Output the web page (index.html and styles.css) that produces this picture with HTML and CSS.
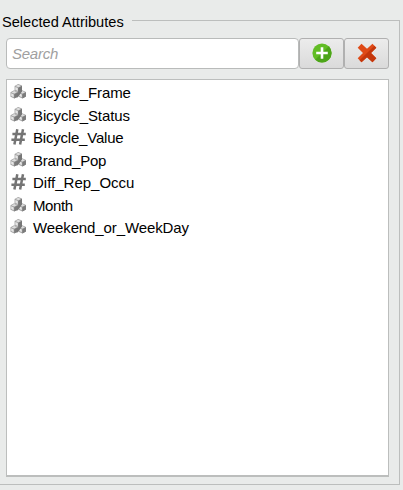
FILE: index.html
```html
<!DOCTYPE html>
<html lang="en">
<head>
<meta charset="utf-8">
<title>Selected Attributes</title>
<link rel="stylesheet" href="styles.css">
</head>
<body>
<svg class="defs" aria-hidden="true">
  <defs>
    <linearGradient id="side" x1="0" y1="0" x2="1" y2="0"><stop offset="0" stop-color="#777"/><stop offset="1" stop-color="#808080"/></linearGradient>
    <g id="cube">
      <path d="M0 2 3.6 0 7.4 1.6V6.2L3.8 8.2 0 6.4Z" fill="#a2a2a2"/>
      <path d="M.9 2.1 3.7 .8 6.4 1.9 3.8 3.3Z" fill="#dedede"/>
      <path d="M.7 3 3.2 4.1V7L.7 5.8Z" fill="#e6e6e6"/>
      <path d="M3.8 3.9 7.4 2V6.2L3.8 8.2Z" fill="url(#side)"/>
    </g>
    <symbol id="nominal" viewBox="0 0 17 16">
      <use href="#cube" x="4.6" y="0"/>
      <use href="#cube" x=".5" y="6.3"/>
      <use href="#cube" x="8.6" y="6.3"/>
      <path d="M8.4 4 12 2V7.5L8 13 6.6 14V9.8L8.4 8Z" fill="#777"/>
    </symbol>
    <symbol id="numeric" viewBox="0 0 17 16">
      <path d="M7.3 .3 4.4 15.6M13 .3 10.1 15.6M2.4 4.9H15.8M1.4 10.8H14.8" fill="none" stroke="#747474" stroke-width="2.5"/>
    </symbol>
  </defs>
</svg>
<fieldset class="group">
  <legend class="title">Selected Attributes</legend>
  <div class="toolbar">
    <input class="search" type="text" placeholder="Search" aria-label="Search">
    <button class="button" aria-label="Add">
      <svg width="20" height="20" viewBox="0 0 20 20"><circle cx="10" cy="10" r="9.6" fill="#62bd25"/><path d="M16.8 3.2A9.6 9.6 0 0 1 3.2 16.8Z" fill="#4da519"/><path d="M10 4.2V15.8M4.2 10H15.8" stroke="#fff" stroke-width="2.6"/></svg>
    </button>
    <button class="button" aria-label="Remove">
      <svg width="20" height="20" viewBox="0 0 20 20"><path d="M4.5 .8 10 5.7 15.5 .8 19.3 4.8 14 10 19.3 15.2 15.5 19.2 10 14.3 4.5 19.2 .7 15.2 6 10 .7 4.8Z" fill="#df4a17"/><path d="M19.3 4.8 14 10 19.3 15.2 15.5 19.2 10 14.3 4.5 19.2 2.6 17.2 17.4 2.8Z" fill="#c4370c"/></svg>
    </button>
  </div>
  <ul class="list">
    <li class="item"><svg class="icon"><use href="#nominal"/></svg>Bicycle_Frame</li>
    <li class="item"><svg class="icon"><use href="#nominal"/></svg>Bicycle_Status</li>
    <li class="item snug"><svg class="icon"><use href="#numeric"/></svg>Bicycle_Value</li>
    <li class="item snug"><svg class="icon"><use href="#nominal"/></svg>Brand_Pop</li>
    <li class="item wide"><svg class="icon"><use href="#numeric"/></svg>Diff_Rep_Occu</li>
    <li class="item tight"><svg class="icon"><use href="#nominal"/></svg>Month</li>
    <li class="item"><svg class="icon"><use href="#nominal"/></svg>Weekend_or_WeekDay</li>
  </ul>
</fieldset>
</body>
</html>
```
FILE: styles.css
```css
* { box-sizing: border-box; }
body {
  margin: 0;
  height: 490px;
  padding-top: 11px;
  overflow: hidden;
  background: #e9ebea;
  font-family: "Liberation Sans", Arial, sans-serif;
  font-size: 15px;
  color: #000;
}
.defs { position: absolute; width: 0; height: 0; }
.group {
  width: 400px;
  height: 474px;
  margin: 0;
  padding: 0 10px 0 6px;
  border: 1px solid #bcbebd;
  border-left: 0;
  min-width: 0;
}
.title {
  margin-left: -6px;
  padding: 0 8px 0 2px;
  height: 19px;
  line-height: 22px;
  font-size: 14.6px;
}
.toolbar { display: flex; margin-top: 8px; height: 31px; }
.search {
  width: 293px;
  height: 31px;
  padding: 0 5px;
  border: 1px solid #b9bbba;
  border-radius: 4px;
  background: #fff;
  font: italic 15px "Liberation Sans", Arial, sans-serif;
  letter-spacing: -.25px;
  outline: 0;
}
.search::placeholder { color: #a0a0a0; opacity: 1; }
.button {
  width: 45px;
  height: 31px;
  padding: 0 0 1px;
  display: flex;
  align-items: center;
  justify-content: center;
  border: 1px solid #b0b0b0;
  border-radius: 3px;
  background: linear-gradient(#ececec, #dadada);
}
.list {
  list-style: none;
  margin: 10px 0 0;
  padding: 2px 3px;
  width: 383px;
  height: 398px;
  border: 1px solid #bcbebd;
  border-bottom-width: 2px;
  background: #fff;
}
.item {
  display: flex;
  align-items: center;
  gap: 6px;
  height: 22.5px;
  line-height: 22px;
  letter-spacing: -.11px;
}
.snug { letter-spacing: -.2px; }
.tight { letter-spacing: -.4px; }
.wide { letter-spacing: 0; }
.icon { width: 17px; height: 16px; margin-bottom: 2px; }
```
